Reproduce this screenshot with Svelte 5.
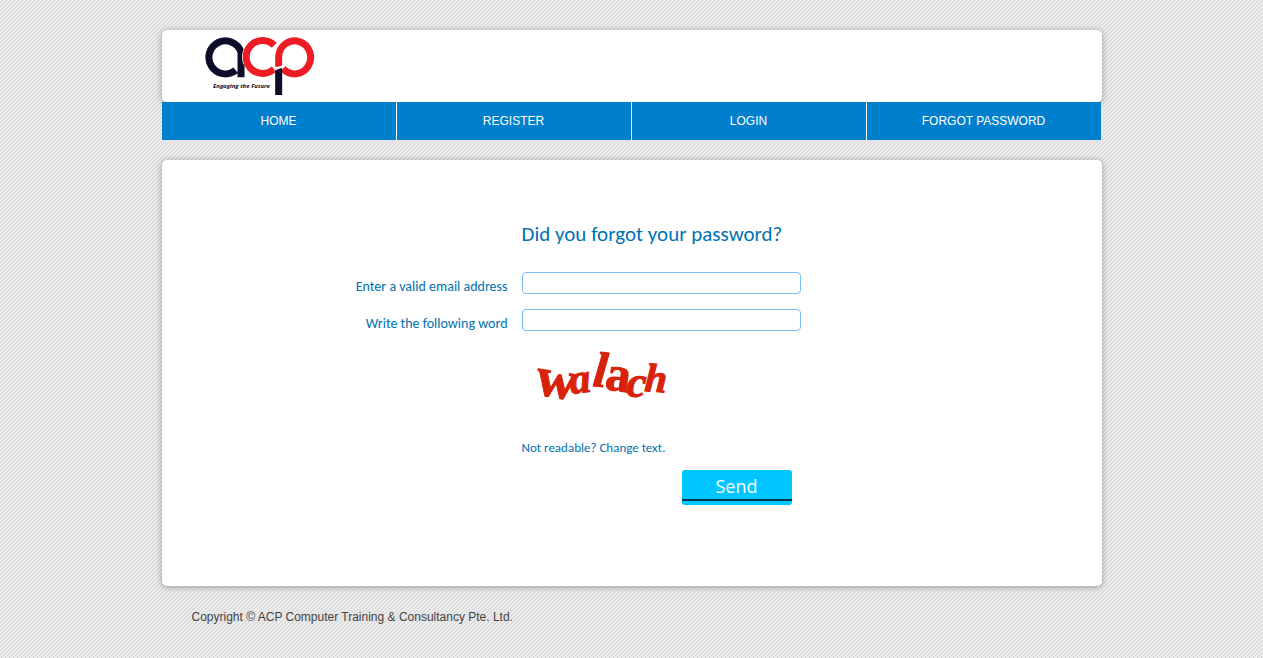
<script>
  const links = ['HOME', 'REGISTER', 'LOGIN', 'FORGOT PASSWORD'];
  let email = $state('');
  let word = $state('');
</script>

<div class="page">
  <header>
    <a class="logo" href="#home" aria-label="ACP, Engaging the Future">
      <svg viewBox="30 24 330 180" width="110" height="60" aria-hidden="true">
        <g fill="none" stroke-width="21">
          <path stroke="#0d0d2b" d="M122 127A49.500 49.500 0 1 1 138 72V148" />
          <path stroke="#fff" stroke-width="23" d="M156 105A49.500 49.500 0 0 1 156 69" />
          <path stroke="#ee1c25" d="M237 123A49.500 49.500 0 1 1 238 52" />
          <path stroke="#fff" stroke-width="27" d="M251 113V87A48 49.500 0 0 1 270 46" />
          <path stroke="#ee1c25" d="M251 116V87A48 49.500 0 1 1 264 122" />
          <path stroke="#0d0d2b" d="M251 121V201" />
        </g>
        <path d="M238 122L264 111V117L238 128Z" fill="#fff" />
        <text x="54" y="180" class="motto">Engaging the Future</text>
      </svg>
    </a>
  </header>

  <nav aria-label="Main">
    {#each links as link}
      <a href="#{link.toLowerCase().replace(' ', '-')}">{link}</a>
    {/each}
  </nav>

  <main>
    <form onsubmit={(e) => e.preventDefault()}>
      <h1>Did you forgot your password?</h1>
      <label for="email">Enter a valid email address</label>
      <input id="email" type="email" bind:value={email} />
      <label for="word">Write the following word</label>
      <input id="word" type="text" bind:value={word} />
      <svg class="captcha" viewBox="0 0 160 80" width="160" height="80" role="img" aria-label="Verification word">
        <g class="letters">
          <text x="12" y="54" font-size="56" class="upright" transform="rotate(9 12 54)">w</text>
          <text x="49" y="54" font-size="42" transform="rotate(-7 49 54)">a</text>
          <text x="70" y="46" font-size="50" transform="rotate(6 70 46)">l</text>
          <text x="82" y="49" font-size="50" class="upright" transform="rotate(8 82 49)">a</text>
          <text x="104" y="56" font-size="44" transform="rotate(4 104 56)">c</text>
          <text x="122" y="51" font-size="40" transform="rotate(4 122 51)">h</text>
        </g>
      </svg>
      <a class="change" href="#change">Not readable? Change text.</a>
      <button type="submit">Send</button>
    </form>
  </main>

  <footer>Copyright © ACP Computer Training &amp; Consultancy Pte. Ltd.</footer>
</div>

<style>
  :global(body) {
    margin: 0;
    background: #ebebeb linear-gradient(135deg, transparent 0 25%, #d2d2d2 25% 37.5%, transparent 37.5% 75%, #d2d2d2 75% 87.5%, transparent 87.5%) 0 0 / 4px 4px;
    font-family: "Liberation Sans", Arial, sans-serif;
    font-size: 12px;
  }
  .page {
    max-width: 940px;
    margin: 0 auto;
    padding: 30px 0;
  }
  header,
  main {
    background: #fff;
    border-radius: 5px;
    box-shadow: 0 1px 6px rgba(0, 0, 0, 0.35);
  }
  header {
    padding: 6px 43px;
  }
  .logo,
  .logo svg {
    display: block;
    width: 110px;
  }
  .motto {
    font: italic bold 18px "Open Sans", sans-serif;
    fill: #0d0d2b;
  }
  nav {
    position: relative;
    display: grid;
    grid-template-columns: repeat(4, 1fr);
    gap: 1px;
    margin-right: 1px;
    background: #fff;
  }
  nav a {
    background: #007fcc;
    color: #fff;
    line-height: 38px;
    text-align: center;
    text-decoration: none;
  }
  main {
    margin-top: 20px;
    padding: 60px 0 81px;
  }
  form {
    display: grid;
    grid-template-columns: minmax(0, 346px) minmax(0, 279px);
    column-gap: 14px;
    font-family: Carlito, Lato, sans-serif;
    color: #0072b1;
  }
  h1 {
    grid-column: 2;
    margin: 0 0 24px;
    font-size: 21px;
    font-weight: 400;
    line-height: 28px;
    white-space: nowrap;
  }
  label {
    padding-top: 5px;
    font-size: 14px;
    line-height: 20px;
    text-align: right;
  }
  input {
    box-sizing: border-box;
    width: 100%;
    height: 22px;
    margin: 0 0 15px;
    padding: 0 6px;
    border: 1px solid #7ebcf8;
    border-radius: 4px;
    background: #fff;
    font: inherit;
  }
  .captcha {
    grid-column: 2;
    margin-top: -6px;
  }
  .letters {
    fill: #d9220a;
    stroke: #d9220a;
    stroke-width: 1;
    stroke-linejoin: round;
    font-family: "Liberation Serif", serif;
    font-style: italic;
    font-weight: 700;
  }
  .upright {
    font-style: normal;
  }
  .change {
    grid-column: 2;
    margin-top: 18px;
    color: inherit;
    font-size: 13px;
    line-height: 20px;
    text-decoration: none;
  }
  button {
    grid-column: 2;
    justify-self: end;
    width: 110px;
    height: 35px;
    margin: 12px 9px 0 0;
    padding: 0 0 4px;
    border: 0;
    border-radius: 3px;
    background: linear-gradient(#00c6ff 29px, #07384d 29px 31px, #00c6ff 31px);
    color: #fff;
    font: 400 18px/28px "Open Sans", sans-serif;
  }
  footer {
    padding: 23px 30px 0;
    color: #444;
    line-height: 16px;
  }
</style>
